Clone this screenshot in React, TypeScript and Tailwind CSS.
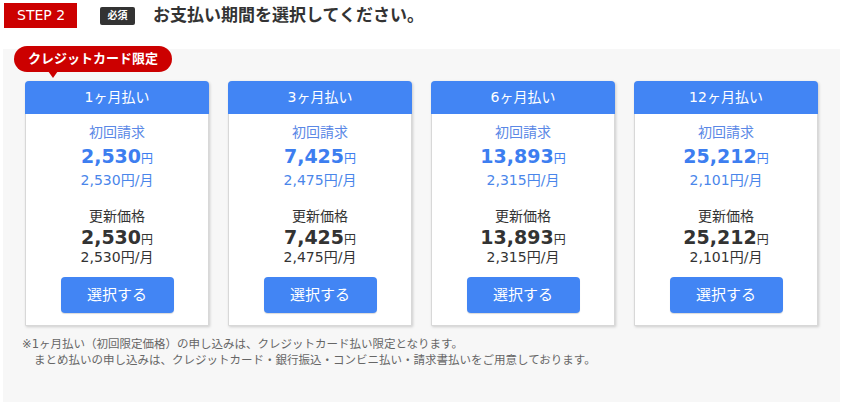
const plans = [
  { label: "1ヶ月払い", first: "2,530", firstMonthly: "2,530", renew: "2,530", renewMonthly: "2,530" },
  { label: "3ヶ月払い", first: "7,425", firstMonthly: "2,475", renew: "7,425", renewMonthly: "2,475" },
  { label: "6ヶ月払い", first: "13,893", firstMonthly: "2,315", renew: "13,893", renewMonthly: "2,315" },
  { label: "12ヶ月払い", first: "25,212", firstMonthly: "2,101", renew: "25,212", renewMonthly: "2,101" },
]

const font = "font-['DejaVu_Sans','Noto_Sans_CJK_JP',sans-serif]"

function PlanCard({ plan }: { plan: (typeof plans)[number] }) {
  return (
    <div className="w-[184px] h-[245px] bg-white rounded-t-[4px] border border-[#d8d8d8] shadow-[1px_1px_3px_rgba(0,0,0,0.18)] flex flex-col">
      <div className="h-[33px] -mx-px -mt-px bg-[#4285f4] rounded-t-[4px] flex items-center justify-center text-white text-[14px]">
        {plan.label}
      </div>
      <div className="flex flex-col items-center">
        <div className="mt-[8px] h-[20px] leading-[20px] text-[14px] text-[#5b88e6]">初回請求</div>
        <div className="h-[28px] leading-[28px] text-[#3d7ef0]">
          <span className="text-[19px] font-bold">{plan.first}</span>
          <span className="text-[12px]">円</span>
        </div>
        <div className="h-[20px] leading-[20px] text-[14px] text-[#4a86ea]">{plan.firstMonthly}円/月</div>
        <div className="mt-[16px] h-[20px] leading-[20px] text-[14px] text-[#333]">更新価格</div>
        <div className="h-[22px] leading-[22px] text-[#333]">
          <span className="text-[19px] font-bold">{plan.renew}</span>
          <span className="text-[12px]">円</span>
        </div>
        <div className="h-[18px] leading-[18px] text-[14px] text-[#333]">{plan.renewMonthly}円/月</div>
        <button className="mt-[11px] w-[113px] h-[36px] rounded-[4px] bg-[#4285f4] text-white text-[15px] shadow-[0_1px_1px_rgba(0,0,0,0.15)]">
          選択する
        </button>
      </div>
    </div>
  )
}

export default function App() {
  return (
    <div className={`w-[845px] h-[407px] bg-white ${font}`}>
      <div className="flex items-center pt-[3px] h-[28px]">
        <div className="ml-[4px] w-[73px] h-[25px] bg-[#cc0000] text-white text-[14px] leading-[25px] pl-[13px]">
          STEP 2
        </div>
        <div className="ml-[23px] w-[35px] h-[18px] bg-[#333] rounded-[2px] text-white text-[10px] font-bold flex items-center justify-center">
          必須
        </div>
        <div className="ml-[18px] text-[17px] font-bold text-[#333] leading-[25px]">お支払い期間を選択してください。</div>
      </div>

      <div className="relative mt-[21px] ml-[3px] w-[837px] h-[353px] bg-[#f7f7f7] pt-[32px] pl-[22px]">
        <div className="absolute left-[11px] top-[-3px] w-[158px] h-[26px] rounded-full bg-[#cc0000] text-white text-[13px] font-bold flex items-center justify-center">
          クレジットカード限定
          <span className="absolute left-[34px] top-[25px] w-0 h-0 border-l-[5px] border-r-[5px] border-t-[7px] border-l-transparent border-r-transparent border-t-[#cc0000]" />
        </div>

        <div className="flex gap-[19px]">
          {plans.map((p) => (
            <PlanCard key={p.label} plan={p} />
          ))}
        </div>

        <div className="mt-[10px] -ml-[3px] text-[11.5px] leading-[16px] text-[#666]">
          <p>※1ヶ月払い（初回限定価格）の申し込みは、クレジットカード払い限定となります。</p>
          <p className="pl-[12px]">まとめ払いの申し込みは、クレジットカード・銀行振込・コンビニ払い・請求書払いをご用意しております。</p>
        </div>
      </div>
    </div>
  )
}
